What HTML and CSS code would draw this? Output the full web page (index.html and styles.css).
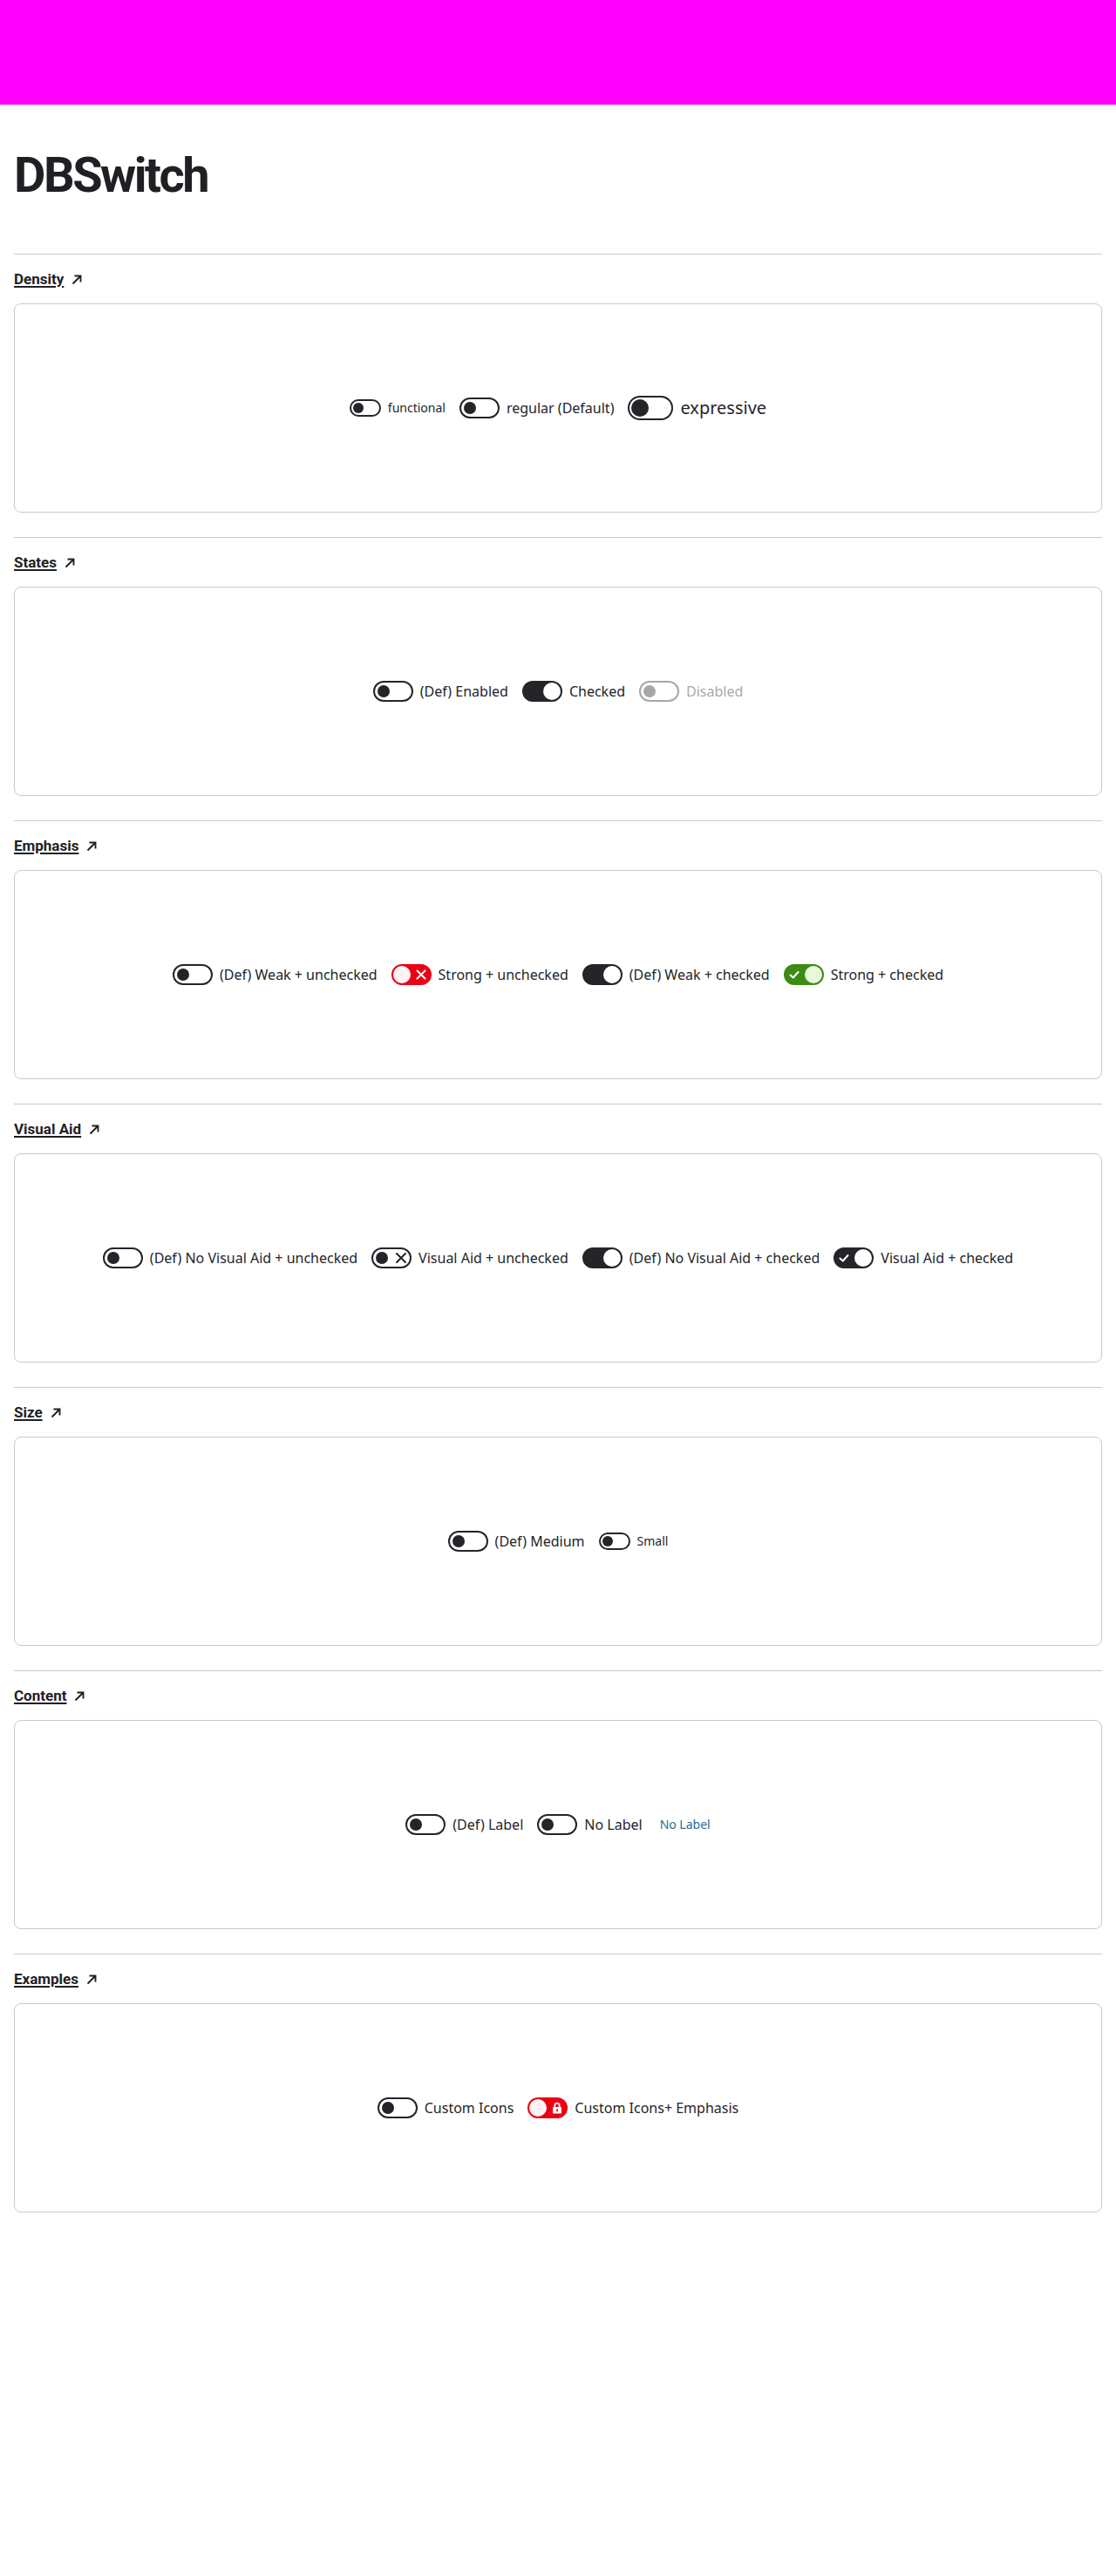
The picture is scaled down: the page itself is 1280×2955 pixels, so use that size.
FILE: index.html
```html
<!DOCTYPE html>
<html lang="en">
<head>
<meta charset="utf-8">
<title>DBSwitch</title>
<link rel="stylesheet" href="styles.css">
</head>
<body>
<header class="topbar"></header>
<main class="page">
  <h1 class="title">DBSwitch</h1>

  <section class="section">
    <h2 class="sec-head"><a href="#" class="sec-link">Density</a><svg class="arrow" viewBox="0 0 12 12"><path d="M1.5 10.5 L10 2 M3.5 1.5 H10.5 V8.5"/></svg></h2>
    <div class="card">
      <label class="sw fn"><span class="track"><span class="knob"></span></span><span class="lbl">functional</span></label>
      <label class="sw"><span class="track"><span class="knob"></span></span><span class="lbl">regular (Default)</span></label>
      <label class="sw ex"><span class="track"><span class="knob"></span></span><span class="lbl">expressive</span></label>
    </div>
  </section>

  <section class="section">
    <h2 class="sec-head"><a href="#" class="sec-link">States</a><svg class="arrow" viewBox="0 0 12 12"><path d="M1.5 10.5 L10 2 M3.5 1.5 H10.5 V8.5"/></svg></h2>
    <div class="card">
      <label class="sw"><span class="track"><span class="knob"></span></span><span class="lbl">(Def) Enabled</span></label>
      <label class="sw"><span class="track on"><span class="knob"></span></span><span class="lbl">Checked</span></label>
      <label class="sw disabled"><span class="track"><span class="knob"></span></span><span class="lbl">Disabled</span></label>
    </div>
  </section>

  <section class="section">
    <h2 class="sec-head"><a href="#" class="sec-link">Emphasis</a><svg class="arrow" viewBox="0 0 12 12"><path d="M1.5 10.5 L10 2 M3.5 1.5 H10.5 V8.5"/></svg></h2>
    <div class="card">
      <label class="sw"><span class="track"><span class="knob"></span></span><span class="lbl">(Def) Weak + unchecked</span></label>
      <label class="sw"><span class="track strong"><span class="knob"></span><svg class="ico light" viewBox="0 0 20 20"><path d="M5.5 5.5 L14.5 14.5 M14.5 5.5 L5.5 14.5"/></svg></span><span class="lbl">Strong + unchecked</span></label>
      <label class="sw"><span class="track on"><span class="knob"></span></span><span class="lbl">(Def) Weak + checked</span></label>
      <label class="sw"><span class="track strong on"><svg class="ico light" viewBox="0 0 20 20"><path d="M5.5 10.5 L8.7 13.5 L14.5 7"/></svg><span class="knob"></span></span><span class="lbl">Strong + checked</span></label>
    </div>
  </section>

  <section class="section">
    <h2 class="sec-head"><a href="#" class="sec-link">Visual Aid</a><svg class="arrow" viewBox="0 0 12 12"><path d="M1.5 10.5 L10 2 M3.5 1.5 H10.5 V8.5"/></svg></h2>
    <div class="card">
      <label class="sw"><span class="track"><span class="knob"></span></span><span class="lbl">(Def) No Visual Aid + unchecked</span></label>
      <label class="sw"><span class="track aid"><span class="knob"></span><svg class="ico dark" viewBox="0 0 20 20"><path d="M5 5 L15 15 M15 5 L5 15"/></svg></span><span class="lbl">Visual Aid + unchecked</span></label>
      <label class="sw"><span class="track on"><span class="knob"></span></span><span class="lbl">(Def) No Visual Aid + checked</span></label>
      <label class="sw"><span class="track on"><svg class="ico light" viewBox="0 0 20 20"><path d="M5.5 10.5 L8.7 13.5 L14.5 7"/></svg><span class="knob"></span></span><span class="lbl">Visual Aid + checked</span></label>
    </div>
  </section>

  <section class="section">
    <h2 class="sec-head"><a href="#" class="sec-link">Size</a><svg class="arrow" viewBox="0 0 12 12"><path d="M1.5 10.5 L10 2 M3.5 1.5 H10.5 V8.5"/></svg></h2>
    <div class="card">
      <label class="sw"><span class="track"><span class="knob"></span></span><span class="lbl">(Def) Medium</span></label>
      <label class="sw fn"><span class="track"><span class="knob"></span></span><span class="lbl">Small</span></label>
    </div>
  </section>

  <section class="section">
    <h2 class="sec-head"><a href="#" class="sec-link">Content</a><svg class="arrow" viewBox="0 0 12 12"><path d="M1.5 10.5 L10 2 M3.5 1.5 H10.5 V8.5"/></svg></h2>
    <div class="card">
      <label class="sw"><span class="track"><span class="knob"></span></span><span class="lbl">(Def) Label</span></label>
      <label class="sw"><span class="track"><span class="knob"></span></span><span class="lbl">No Label</span></label>
      <span class="note">No Label</span>
    </div>
  </section>

  <section class="section">
    <h2 class="sec-head"><a href="#" class="sec-link">Examples</a><svg class="arrow" viewBox="0 0 12 12"><path d="M1.5 10.5 L10 2 M3.5 1.5 H10.5 V8.5"/></svg></h2>
    <div class="card">
      <label class="sw"><span class="track"><span class="knob"></span></span><span class="lbl">Custom Icons</span></label>
      <label class="sw"><span class="track strong"><span class="knob"></span><svg class="ico lock" viewBox="0 0 20 20"><path class="shackle" d="M7.3 9.5 V7.3 a2.7 2.7 0 0 1 5.4 0 V9.5"/><rect x="5" y="9" width="10" height="7.5" rx="1"/><rect class="hole" x="9.1" y="11.3" width="1.8" height="3" rx="0.5"/></svg></span><span class="lbl">Custom Icons+ Emphasis</span></label>
    </div>
  </section>
</main>
</body>
</html>
```

FILE: styles.css
```css
html, body {
  margin: 0;
  padding: 0;
  background: #ffffff;
}

body {
  font-family: "Noto Sans", "Open Sans", sans-serif;
  color: #232529;
}

.topbar {
  height: 120px;
  background: #ff00ff;
}

.page {
  padding: 0 16px;
}

.title {
  font-family: Roboto, "Liberation Sans", sans-serif;
  font-weight: 700;
  font-size: 56px;
  line-height: 64px;
  letter-spacing: -2.5px;
  margin: 49px 0 58px;
  color: #1f2023;
}

.section {
  border-top: 1px solid #c9cacd;
  padding: 16px 0 28px;
}

.section:last-child {
  padding-bottom: 0;
}

.sec-head {
  margin: 0 0 16px;
  display: flex;
  align-items: center;
  gap: 9px;
  font-family: Roboto, "Liberation Sans", sans-serif;
  font-weight: 700;
  font-size: 17px;
  line-height: 24px;
}

.sec-link {
  color: #1f2023;
  text-decoration: underline;
  text-underline-offset: 2px;
  text-decoration-thickness: 1.5px;
}

.arrow {
  width: 12px;
  height: 12px;
  fill: none;
  stroke: #1f2023;
  stroke-width: 1.9;
  margin-top: 2px;
}

.card {
  box-sizing: border-box;
  height: 240px;
  border: 1px solid #c9cacd;
  border-radius: 8px;
  display: flex;
  justify-content: center;
  align-items: center;
  gap: 16px;
}

/* switch */
.sw {
  display: inline-flex;
  align-items: center;
  gap: 8px;
  font-size: 16px;
  line-height: 24px;
  color: #232529;
}

.track {
  box-sizing: border-box;
  width: 46px;
  height: 24px;
  border: 2px solid #232529;
  border-radius: 12px;
  display: flex;
  align-items: center;
  justify-content: space-between;
  padding: 0 3px;
  flex: none;
}

.knob {
  width: 14px;
  height: 14px;
  border-radius: 50%;
  background: #232529;
  flex: none;
}

.track.on {
  background: #232529;
  padding: 0;
}

.track.on .knob {
  width: 20px;
  height: 20px;
  background: #ffffff;
  margin-left: auto;
}

.track.aid {
  padding: 0 0 0 3px;
}

.track.strong {
  background: #ec0016;
  border-color: #ec0016;
  padding: 0;
}

.track.strong .knob {
  width: 20px;
  height: 20px;
  background: #fff4f4;
}

.track.strong.on {
  background: #3f8a14;
  border-color: #3f8a14;
}

.track.strong.on .knob {
  background: #e8f8dc;
}

.ico {
  width: 20px;
  height: 20px;
  flex: none;
  fill: none;
  stroke-width: 2;
  stroke-linecap: round;
  stroke-linejoin: round;
}

.ico.light {
  stroke: #ffffff;
}

.ico.dark {
  stroke: #232529;
}

.ico.lock {
  fill: #ffffff;
  stroke: none;
}

.ico.lock .shackle {
  fill: none;
  stroke: #ffffff;
  stroke-width: 1.8;
}

.ico.lock .hole {
  fill: #ec0016;
}

/* functional / small */
.sw.fn {
  font-size: 14px;
  line-height: 20px;
}

.sw.fn .track {
  width: 36px;
  height: 20px;
  border-radius: 10px;
  padding: 0 2px;
}

.sw.fn .knob {
  width: 12px;
  height: 12px;
}

/* expressive */
.sw.ex {
  font-size: 20px;
  line-height: 28px;
}

.sw.ex .track {
  width: 52px;
  height: 28px;
  border-radius: 14px;
  padding: 0 2px;
}

.sw.ex .knob {
  width: 20px;
  height: 20px;
}

.sw.disabled {
  opacity: 0.4;
}

.note {
  font-size: 14px;
  line-height: 20px;
  color: #2a6991;
  margin-left: 4px;
}
```
